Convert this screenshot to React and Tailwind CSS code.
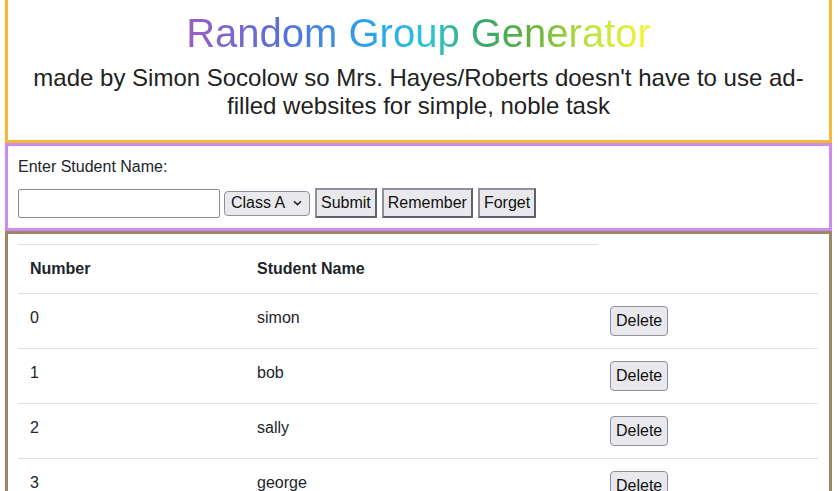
import { useState } from 'react'

const startingStudents = ['simon', 'bob', 'sally', 'george']

export default function App() {
  const [name, setName] = useState('')
  const [group, setGroup] = useState('Class A')
  const [students, setStudents] = useState(startingStudents)

  const handleSubmit = () => {
    if (!name.trim()) return
    setStudents([...students, name.trim()])
    setName('')
  }

  const handleDelete = (i) => {
    setStudents(students.filter((_, idx) => idx !== i))
  }

  const oldButton =
    'px-1 py-1 border-2 border-t-[#8f8f9d] border-l-[#8f8f9d] border-b-[#606068] border-r-[#606068] bg-[#e9e9ed] leading-[18px] text-[#111]'

  return (
    <main className="min-h-screen bg-white pl-[5px] pr-[6px] font-['Liberation_Sans',Arial,sans-serif] text-[#212529]">
      <header className="border-x-3 border-b-3 border-[#f7b733] pt-[10px] pb-[20px] text-center">
        <h1 className="mx-auto w-fit text-[40px] leading-[46px] font-normal bg-[linear-gradient(to_right,#9a5ec4_0%,#5a6fd6_20%,#2ba3ee_40%,#2cc5d2_52%,#38a86c_64%,#63b13e_74%,#bde43e_87%,#f6f43b_100%)] bg-clip-text text-transparent">
          Random Group Generator
        </h1>
        <h2 className="mt-[8px] px-[20px] text-[24px] leading-[28px] font-normal text-[#222]">
          made by Simon Socolow so Mrs. Hayes/Roberts doesn't have to use ad-filled websites for simple, noble task
        </h2>
      </header>

      <section className="border-3 border-[#cd8af0] px-[10px] pt-[12px] pb-[10px]">
        <label htmlFor="student" className="block text-[16px] leading-[18px]">
          Enter Student Name:
        </label>
        <div className="mt-[12px] flex items-center">
          <input
            id="student"
            value={name}
            onChange={(e) => setName(e.target.value)}
            className="w-[202px] h-[29px] border border-[#8a8a96] rounded-[2px] px-1 outline-none"
          />
          <div className="ml-[4px] flex items-center w-[86px] h-[25px] border border-[#8f8f9d] rounded-[4px] bg-[#e9e9ed]">
            <select
              value={group}
              onChange={(e) => setGroup(e.target.value)}
              className="appearance-none bg-transparent pl-[6px] flex-1 h-full outline-none text-[#111] leading-[18px]"
            >
              <option>Class A</option>
              <option>Class B</option>
            </select>
            <svg width="9" height="6" viewBox="0 0 9 6" className="mr-[7px] pointer-events-none">
              <path d="M1 1.2 L4.5 4.6 L8 1.2" fill="none" stroke="#222" strokeWidth="1.5" />
            </svg>
          </div>
          <button onClick={handleSubmit} className={`ml-[5px] ${oldButton}`}>Submit</button>
          <button className={`ml-[5px] ${oldButton}`}>Remember</button>
          <button onClick={() => setStudents([])} className={`ml-[5px] ${oldButton}`}>Forget</button>
        </div>
      </section>

      <section className="border-x-3 border-t-3 border-[#9d8666] pl-[10px] pr-[11px] pt-[10px] pb-[10px]">
        <table className="w-full table-fixed border-collapse text-[16px] leading-[24px]">
          <colgroup>
            <col className="w-[227px]" />
            <col className="w-[353px]" />
            <col />
          </colgroup>
          <thead>
            <tr>
              <th className="border-t border-[#dee2e6] p-[12px] text-left font-bold align-top">Number</th>
              <th className="border-t border-[#dee2e6] p-[12px] text-left font-bold align-top">Student Name</th>
            </tr>
          </thead>
          <tbody>
            {students.map((s, i) => (
              <tr key={i}>
                <td className="border-t border-[#dee2e6] p-[12px] align-top">{i}</td>
                <td className="border-t border-[#dee2e6] p-[12px] align-top">{s}</td>
                <td className="border-t border-[#dee2e6] p-[12px] align-top">
                  <button
                    onClick={() => handleDelete(i)}
                    className="px-[5px] py-[5px] border border-[#8f8f9d] rounded-[4px] bg-[#e9e9ed] leading-[18px] text-[#111] block"
                  >
                    Delete
                  </button>
                </td>
              </tr>
            ))}
          </tbody>
        </table>
      </section>
    </main>
  )
}
